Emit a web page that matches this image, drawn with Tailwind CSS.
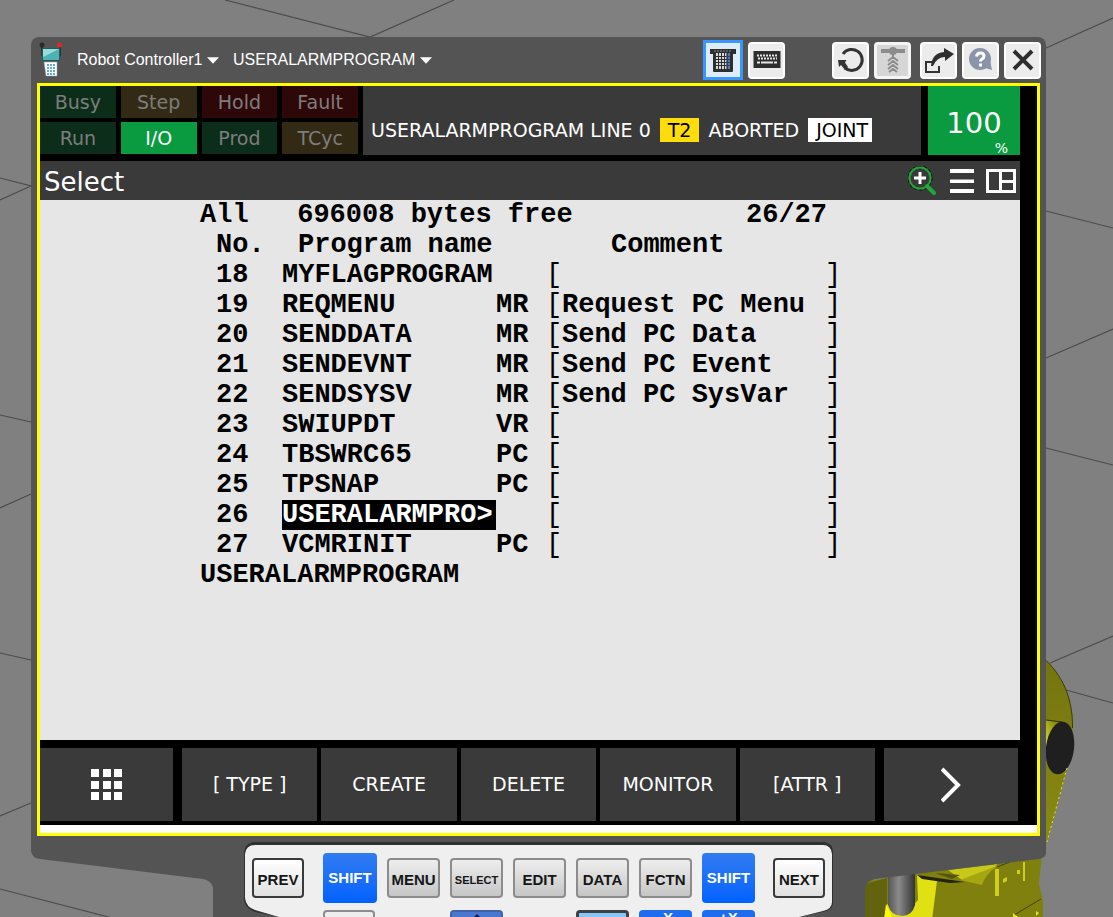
<!DOCTYPE html>
<html lang="en">
<head>
    <meta charset="UTF-8" />
    <meta name="viewport" content="width=device-width, initial-scale=1.0" />
    <script src="https://cdn.jsdelivr.net/npm/@tailwindcss/browser@4"></script>
    <title>Teach Pendant</title>
</head>
<body class="relative h-screen overflow-hidden bg-[#808080] font-['DejaVu_Sans',sans-serif]">
    <!-- 3D scene behind the pendant -->
    <svg class="absolute inset-0 w-full h-full" viewBox="0 0 1113 917" preserveAspectRatio="xMidYMid slice" aria-hidden="true">
        <defs>
            <linearGradient id="shell" x1="0" x2="0" y1="0" y2="1">
                <stop offset="0" stop-color="#747410" />
                <stop offset="1" stop-color="#8a8a12" />
            </linearGradient>
            <linearGradient id="arm" x1="0" x2="1" y1="1" y2="0">
                <stop offset="0" stop-color="#f0f020" />
                <stop offset="1" stop-color="#6c6c10" />
            </linearGradient>
            <linearGradient id="motor" x1="0" x2="1" y1="0" y2="0">
                <stop offset="0" stop-color="#555" />
                <stop offset="0.4" stop-color="#8a8a8a" />
                <stop offset="1" stop-color="#333" />
            </linearGradient>
        </defs>
        <!-- Floor grid -->
        <g stroke="#4c4c4c" stroke-width="1.2" fill="none">
            <path d="M225 0L370 37L454 0" />
            <path d="M0 178L31 186L0 200M0 415L31 422M0 508L31 494M0 653L31 660M0 816L31 803M0 889L120 920" />
            <path d="M1046 48L1113 18M1046 211L1113 228M1046 358L1113 329M1046 448L1113 465M1050 663L1113 636M1066 690L1113 703" />
        </g>
        <!-- Robot -->
        <path d="M1040 655C1058 670 1073 692 1073 728L1068 766L1046 845L1036 845Z" fill="url(#shell)" />
        <path d="M1040 655C1058 670 1073 692 1072.500 728" fill="none" stroke="#3c3c0c" />
        <path d="M1046 720L1062 722L1050 752L1044 752Z" fill="url(#arm)" />
        <path d="M1046 720L1062 722" stroke="#2e2e08" />
        <ellipse cx="1060" cy="748" rx="14" ry="26.500" transform="rotate(7 1060 748)" fill="#1f1f1f" />
        <path d="M1067 768L1047 842" stroke="#e8e81a" stroke-dasharray="2 3" />
        <path d="M865 920V886Q866 880 875 880L1042 855L1039 884L1043 900V920Z" fill="#80800f" />
        <path d="M865 920V884L887 878L887 920Z" fill="#62620f" />
        <path d="M948 870L997 864L995 868L962 880Z" fill="#c8c81a" />
        <path d="M960 880L997 866Q984 876 982 885Z" fill="#a6a613" />
        <path d="M917 875L937 881L932 920H884L887 904L905 915L918 900Z" fill="#e0e012" />
        <path d="M886 904L892 917V920H884Z" fill="#ffff00" />
        <path d="M917 875L965 882L950 883L922 879Z" fill="#23230a" />
        <path d="M935 873L960 875L952 879Z" fill="#55550f" />
        <path d="M888 874H915V905Q912 916 902 916Q891 916 888 905Z" fill="url(#motor)" />
        <path d="M995 869H999V896H995ZM1023 862H1025V881H1023ZM1003 879L1007 877V881L1003 883ZM1017 870H1020V874H1017Z" fill="#cfcf18" />
        <path d="M997 867L1010 862M1014 915L1041 899" stroke="#43430c" />
        <path d="M1013 913L1018 917H1013ZM1036 911L1039 913L1036 916Z" fill="#e4e41a" />
    </svg>

    <main class="relative ml-[31px] mr-[67px] pt-[37px]">
        <!-- Title bar -->
        <header class="h-[46px] pl-2 pr-[5px] flex items-center bg-[#545454] rounded-t-lg text-base text-white font-['Liberation_Sans',sans-serif]">
            <svg class="w-6 h-9 mr-3.5" viewBox="0 0 24 36" aria-hidden="true">
                <path d="M3 4V14M21 4V14" stroke="#333" stroke-width="2" />
                <circle cx="3" cy="3" r="2.500" fill="#2e2a28" />
                <circle cx="20.500" cy="3" r="2.500" fill="#e02a20" />
                <rect x="3.500" y="6.500" width="17" height="12" fill="#4bb3b3" stroke="#1f5c60" />
                <path d="M4 7H20L4 15Z" fill="#9adada" />
                <path d="M5 20H18V34H7L6 27Z" fill="#fff" stroke="#999" stroke-width=".5" />
                <path d="M8 23H16M8 26H16M8 29H16M8 32H16" stroke="#5ea9e0" stroke-width="2" stroke-dasharray="2 1" />
            </svg>
            <select aria-label="Controller" class="appearance-none outline-none">
                <option>Robot Controller1</option>
            </select>
            <svg class="w-3 h-2 ml-1 mr-3.5" viewBox="0 0 13 8" fill="#fff" aria-hidden="true"><path d="M0 1H13L6.500 8Z" /></svg>
            <select aria-label="Program" class="appearance-none outline-none">
                <option>USERALARMPROGRAM</option>
            </select>
            <svg class="w-3 h-2 ml-1" viewBox="0 0 13 8" fill="#fff" aria-hidden="true"><path d="M0 1H13L6.500 8Z" /></svg>

            <div class="ml-auto flex items-center gap-[5px]">
                <button type="button" aria-label="Pendant" class="size-10 flex items-center justify-center border-[3px] border-[#3797fb] bg-[#dcecfb]">
                    <svg class="w-7 h-7" viewBox="0 0 28 28">
                        <path d="M1 3H27V8H24V25Q24 26 23 26H5Q4 26 4 25V8H1Z" fill="#2e2e2e" />
                        <rect x="7" y="7" width="14" height="16" fill="#d8d8d8" />
                        <path d="M7 10.500H21M7 13.500H21M7 16.500H21M7 19.500H21M9.500 7V23M12.500 7V23M15.500 7V23M18.500 7V23" stroke="#2e2e2e" />
                        <path d="M17 7H21V23H17Z" fill="#2d4c86" opacity=".7" />
                        <path d="M5 5H23" stroke="#888" stroke-dasharray="2 1" />
                    </svg>
                </button>
                <button type="button" aria-label="Keyboard" class="size-[37px] mr-[42px] flex items-center justify-center rounded border-2 border-white bg-[#ececec]">
                    <svg class="w-7 h-7" viewBox="0 0 28 28">
                        <rect x="0.500" y="5" width="27" height="17" fill="#2e2e2e" />
                        <path d="M4 9.500H24M5 12.500H24" stroke="#e6e6e6" stroke-width="2" stroke-dasharray="2 1" />
                        <path d="M4 16.500H7M8 16.500H20M21 16.500H24" stroke="#e6e6e6" stroke-width="2" />
                    </svg>
                </button>
                <button type="button" aria-label="Restart" class="size-[37px] flex items-center justify-center rounded border-2 border-white bg-[#ececec]">
                    <svg class="w-7 h-7" viewBox="0 0 28 28" fill="none" stroke="#333" stroke-width="3">
                        <path d="M6 8A10.500 10.500 0 1 1 8 22" />
                        <path d="M1 14H9.500L8 16.500L11 21L8 24L4 19L2 21Z" fill="#333" stroke="none" />
                    </svg>
                </button>
                <button type="button" aria-label="Robot tool" disabled class="size-[37px] mr-1 flex items-center justify-center rounded border-[3px] border-[#f4f4f4] bg-[#d6d6d6]">
                    <svg class="w-7 h-7" viewBox="0 0 28 28" fill="none" stroke="#8c8c8c" stroke-width="2">
                        <path d="M2 5H26" stroke-width="4" />
                        <circle cx="14" cy="5" r="4" fill="#8c8c8c" stroke="none" />
                        <path d="M14 8V12M9 15L14 11L19 15M9 19L14 15L19 19M9 23L14 19L19 23M10 26L14 23L18 26" />
                    </svg>
                </button>
                <button type="button" aria-label="Undock" class="size-[37px] flex items-center justify-center rounded border-2 border-white bg-[#ececec]">
                    <svg class="w-[30px] h-7" viewBox="0 0 30 28">
                        <path d="M8 16H2V26H15V20" fill="none" stroke="#333" stroke-width="2" />
                        <path d="M7 20Q8 7 20 6V2L30 8L21 15V11Q13 11 9 20Z" fill="#2e2e2e" />
                    </svg>
                </button>
                <button type="button" aria-label="Help" class="size-[37px] flex items-center justify-center rounded border-2 border-white bg-[#ececec]">
                    <svg class="w-7 h-7" viewBox="0 0 28 28">
                        <circle cx="13" cy="13" r="11" fill="#8b94a9" />
                        <path d="M18 22L25 24L23 14Z" fill="#8b94a9" />
                        <path d="M9.500 10.500Q10 7 13.500 7Q17 7 17 10Q17 12 15 13Q13.500 14 13.500 15.500" fill="none" stroke="#fff" stroke-width="3" />
                        <rect x="12" y="17.500" width="3" height="3" fill="#fff" />
                    </svg>
                </button>
                <button type="button" aria-label="Close" class="size-[37px] flex items-center justify-center rounded border-2 border-white bg-[#ececec]">
                    <svg class="w-7 h-7" viewBox="0 0 28 28" stroke="#2e2e2e" stroke-width="4"><path d="M5 5L23 23M23 5L5 23" /></svg>
                </button>
            </div>
        </header>

        <!-- Pendant screen -->
        <div class="pl-1.5 pr-1.5 bg-[#545454]">
            <section class="border-[3px] border-[#ffff00] bg-black">
                <!-- Status indicators -->
                <div class="h-[69px] pr-[17px] flex text-[19px]">
                    <div class="w-[318px] grid grid-cols-4 gap-x-[5px] gap-y-1 content-start text-center leading-8 text-[#7d7d7d]">
                        <span class="bg-[#0b2d1a]">Busy</span>
                        <span class="bg-[#332a15]">Step</span>
                        <span class="bg-[#2e0709]">Hold</span>
                        <span class="bg-[#2e0709]">Fault</span>
                        <span class="bg-[#0b2d1a]">Run</span>
                        <span class="bg-[#0a9a3f] text-white">I/O</span>
                        <span class="bg-[#0b2d1a]">Prod</span>
                        <span class="bg-[#332a15]">TCyc</span>
                    </div>
                    <div class="flex-1 ml-[5px] mr-[7px] pl-2 pt-8 flex items-start gap-[9px] bg-[#3a3a3a] leading-6 text-white whitespace-nowrap">
                        <span>USERALARMPROGRAM LINE 0</span>
                        <span class="px-2 bg-[#ffdd0a] text-black">T2</span>
                        <span>ABORTED</span>
                        <span class="pl-2 pr-1 bg-white text-black">JOINT</span>
                    </div>
                    <div class="w-[92px] pt-[22px] bg-[#0a9a3f] text-white">
                        <p class="text-center text-[29px] leading-[30px]">100</p>
                        <p class="pr-3 text-right text-sm leading-5">%</p>
                    </div>
                </div>

                <!-- Screen title -->
                <div class="h-[39px] mt-1.5 mr-[17px] pl-1 pr-1 flex items-center bg-[#393a39] text-white">
                    <h1 class="pt-1 text-[26px]">Select</h1>
                    <div class="ml-auto flex items-center gap-3">
                        <button type="button" aria-label="Zoom in">
                            <svg class="w-[30px] h-[30px]" viewBox="0 0 30 30" fill="none">
                                <circle cx="12" cy="12" r="11" stroke="#111" stroke-width="3" stroke-dasharray="3 2" />
                                <circle cx="12" cy="12" r="10.500" stroke="#22a53a" stroke-width="2" />
                                <path d="M19 20L26 27" stroke="#22a53a" stroke-width="4" stroke-linecap="round" />
                                <path d="M12 6V18M6 12H18" stroke="#fff" stroke-width="3" />
                            </svg>
                        </button>
                        <button type="button" aria-label="Menu">
                            <svg class="w-6 h-6" viewBox="0 0 24 24" fill="#fff"><path d="M0 0H24V4H0ZM0 10.500H24V14H0ZM0 20H24V24H0Z" /></svg>
                        </button>
                        <button type="button" aria-label="Split screen">
                            <svg class="w-[30px] h-6" viewBox="0 0 30 24" fill="none" stroke="#fff" stroke-width="3"><path d="M1.500 1.500H28.500V22.500H1.500ZM14.500 1V23M14.500 12.500H29" /></svg>
                        </button>
                    </div>
                </div>

                <!-- Program list -->
                <div class="h-[540px] mr-[17px] pl-[160px] bg-[#e6e6e6] text-black text-[27px] leading-[30px] font-bold font-['Liberation_Mono',monospace]">
                    <div class="w-[641px] flex justify-between">
                        <span class="whitespace-pre">All   696008 bytes free</span>
                        <span class="pr-[14px]">26/27</span>
                    </div>
                    <table class="w-[641px] table-fixed text-left whitespace-nowrap">
                        <colgroup>
                            <col class="w-[82px]" />
                            <col class="w-[214px]" />
                            <col class="w-[50px]" />
                            <col class="w-[16px]" />
                            <col class="w-[263px]" />
                            <col class="w-[16px]" />
                        </colgroup>
                        <thead>
                            <tr>
                                <th class="pl-4">No.</th>
                                <th class="pl-4" colspan="3">Program name</th>
                                <th class="pl-[49px]" colspan="2">Comment</th>
                            </tr>
                        </thead>
                        <tbody>
                            <tr><td class="pl-4">18</td><td>MYFLAGPROGRAM</td><td></td><td class="font-normal">[</td><td></td><td class="font-normal">]</td></tr>
                            <tr><td class="pl-4">19</td><td>REQMENU</td><td>MR</td><td class="font-normal">[</td><td>Request PC Menu</td><td class="font-normal">]</td></tr>
                            <tr><td class="pl-4">20</td><td>SENDDATA</td><td>MR</td><td class="font-normal">[</td><td>Send PC Data</td><td class="font-normal">]</td></tr>
                            <tr><td class="pl-4">21</td><td>SENDEVNT</td><td>MR</td><td class="font-normal">[</td><td>Send PC Event</td><td class="font-normal">]</td></tr>
                            <tr><td class="pl-4">22</td><td>SENDSYSV</td><td>MR</td><td class="font-normal">[</td><td>Send PC SysVar</td><td class="font-normal">]</td></tr>
                            <tr><td class="pl-4">23</td><td>SWIUPDT</td><td>VR</td><td class="font-normal">[</td><td></td><td class="font-normal">]</td></tr>
                            <tr><td class="pl-4">24</td><td>TBSWRC65</td><td>PC</td><td class="font-normal">[</td><td></td><td class="font-normal">]</td></tr>
                            <tr><td class="pl-4">25</td><td>TPSNAP</td><td>PC</td><td class="font-normal">[</td><td></td><td class="font-normal">]</td></tr>
                            <tr><td class="pl-4">26</td><td class="bg-black text-white">USERALARMPRO&gt;</td><td></td><td class="font-normal">[</td><td></td><td class="font-normal">]</td></tr>
                            <tr><td class="pl-4">27</td><td>VCMRINIT</td><td>PC</td><td class="font-normal">[</td><td></td><td class="font-normal">]</td></tr>
                        </tbody>
                    </table>
                    <p>USERALARMPROGRAM</p>
                </div>

                <!-- Soft keys -->
                <div class="h-[73px] mt-2 mb-1 mr-[19px] flex gap-[9px] text-[19px] text-white">
                    <button type="button" aria-label="Menu grid" class="w-[133px] flex items-center justify-center bg-[#3a3a3a]">
                        <svg class="w-8 h-8" viewBox="0 0 32 32" fill="#fff">
                            <path d="M0 0H8V8H0ZM12 0H20V8H12ZM23 0H31V8H23ZM0 12H8V20H0ZM12 12H20V20H12ZM23 12H31V20H23ZM0 23H8V31H0ZM12 23H20V31H12ZM23 23H31V31H23Z" />
                        </svg>
                    </button>
                    <div class="flex-1 grid grid-cols-5 gap-1">
                        <button type="button" class="bg-[#3a3a3a]">[ TYPE ]</button>
                        <button type="button" class="bg-[#3a3a3a]">CREATE</button>
                        <button type="button" class="bg-[#3a3a3a]">DELETE</button>
                        <button type="button" class="bg-[#3a3a3a]">MONITOR</button>
                        <button type="button" class="bg-[#3a3a3a]">[ATTR ]</button>
                    </div>
                    <button type="button" aria-label="Next page" class="w-[134px] flex items-center justify-center bg-[#3a3a3a]">
                        <svg class="w-5 h-9" viewBox="0 0 20 36" fill="none" stroke="#fff" stroke-width="4"><path d="M1 2L17 18L1 34" /></svg>
                    </button>
                </div>
                <div class="h-2 bg-white"></div>
            </section>
        </div>

        <!-- Hard keys -->
        <section class="relative h-[81px] pt-[17px] overflow-hidden">
            <svg class="absolute inset-0 w-full h-full" viewBox="0 0 1015 81" preserveAspectRatio="none" aria-hidden="true">
                <path d="M0 0H1015V18Q1014 22 1008 23L844 43Q835 45 834 53V81H182V52Q181 45 172 43L9 23Q1 22 0 15Z" fill="#545454" />
                <path d="M222 6H794Q802 8 802 16V68Q801 74 792 76L768 81H248L224 76Q214 72 213 64V16Q214 8 222 6Z" fill="#303030" />
                <path d="M224 9H792Q800 9 801 18V66Q801 73 792 75L768 81H248L224 74Q215 71 214 62V18Q215 9 224 9Z" fill="#efefef" />
            </svg>
            <div class="relative grid grid-cols-[61px_54px_53px_53px_53px_53px_53px_53px_60px] gap-x-2.5 gap-y-[7px] justify-center items-center text-[15px] font-bold text-[#161616] font-['Liberation_Sans',sans-serif]">
                <button type="button" class="w-[52px] h-10 pt-1 rounded-sm border-2 border-[#3a3a3a] bg-linear-to-b from-white to-[#e0e0e0]">PREV</button>
                <button type="button" class="h-[50px] rounded bg-linear-to-b from-[#2f7bf0] to-[#0062ff] text-white">SHIFT</button>
                <button type="button" class="h-10 pt-1 rounded border-2 border-[#8c8c8c] bg-linear-to-b from-[#eeeeee] to-[#c6c6c6]">MENU</button>
                <button type="button" class="h-10 pt-1 rounded border-2 border-[#8c8c8c] bg-linear-to-b from-[#eeeeee] to-[#c6c6c6] text-[11px]">SELECT</button>
                <button type="button" class="h-10 pt-1 rounded border-2 border-[#8c8c8c] bg-linear-to-b from-[#eeeeee] to-[#c6c6c6]">EDIT</button>
                <button type="button" class="h-10 pt-1 rounded border-2 border-[#8c8c8c] bg-linear-to-b from-[#eeeeee] to-[#c6c6c6]">DATA</button>
                <button type="button" class="h-10 pt-1 rounded border-2 border-[#8c8c8c] bg-linear-to-b from-[#eeeeee] to-[#c6c6c6]">FCTN</button>
                <button type="button" class="h-[50px] rounded bg-linear-to-b from-[#2f7bf0] to-[#0062ff] text-white">SHIFT</button>
                <button type="button" class="w-[52px] h-10 pt-1 justify-self-end rounded-sm border-2 border-[#3a3a3a] bg-linear-to-b from-white to-[#e0e0e0]">NEXT</button>

                <!-- Second row runs off the bottom edge -->
                <button type="button" aria-label="Step" class="col-start-2 w-[52px] h-10 rounded border-2 border-[#8c8c8c] bg-[#eeeeee]"></button>
                <button type="button" aria-label="Up" class="col-start-4 h-10 flex justify-center rounded border-2 border-[#4262a5] bg-[#4a78d0]">
                    <svg class="w-5 h-5 mt-0.5" viewBox="0 0 20 20" fill="#101c4c"><path d="M10 0L20 10H0Z" /></svg>
                </button>
                <button type="button" aria-label="Shortcut" class="col-start-6 h-10 rounded-sm border-[3px] border-[#404040] bg-[#84c8fa]"></button>
                <button type="button" class="h-10 flex justify-center rounded bg-[#1f6cf0] text-white leading-4">-X</button>
                <button type="button" class="h-10 flex justify-center rounded bg-[#1f6cf0] text-white leading-4">+X</button>
            </div>
        </section>
    </main>
</body>
</html>
